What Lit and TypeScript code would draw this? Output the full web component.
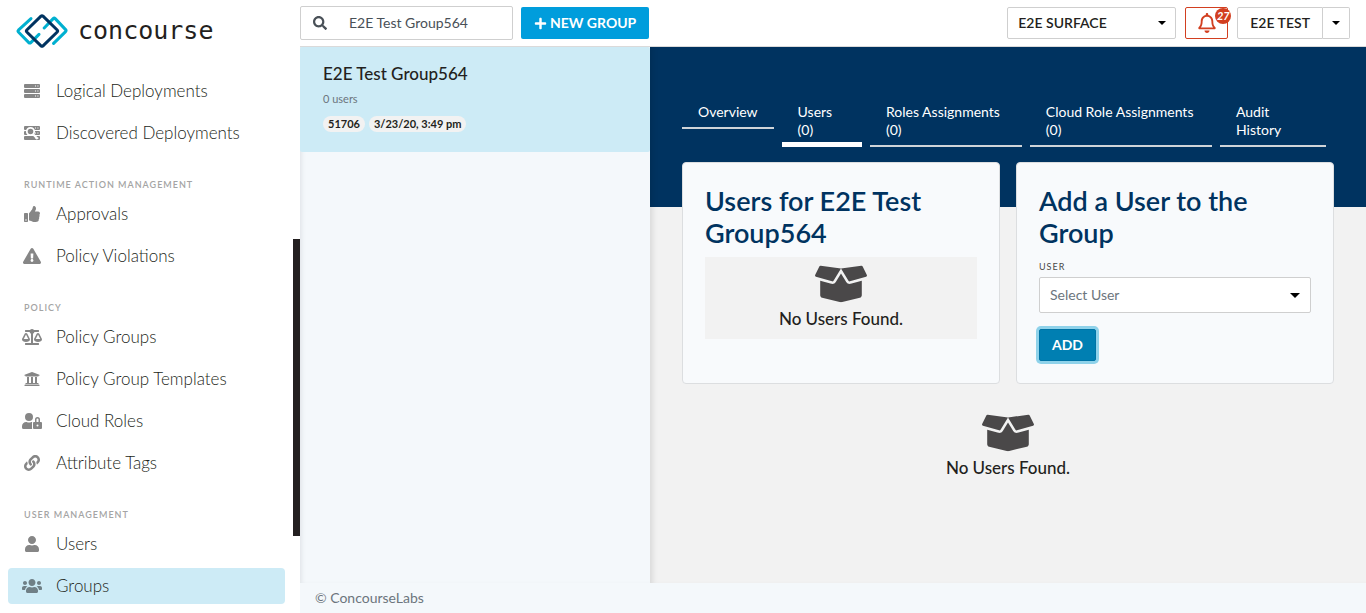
import { LitElement, html, css, svg } from "lit";
import { customElement, property } from "lit/decorators.js";
import { classMap } from "lit/directives/class-map.js";

type Glyph = { w: number; h?: number; d: string };

const GLYPHS: Record<string, Glyph> = {
  search: { w: 512, d: "M505 442.7L405.3 343c-4.5-4.5-10.6-7-17-7H372c27.6-35.3 44-79.7 44-128C416 93.1 322.9 0 208 0S0 93.1 0 208s93.1 208 208 208c48.3 0 92.7-16.4 128-44v16.3c0 6.4 2.5 12.5 7 17l99.7 99.7c9.4 9.4 24.6 9.4 33.9 0l28.3-28.3c9.4-9.4 9.4-24.6.1-34zM208 336c-70.7 0-128-57.2-128-128 0-70.7 57.2-128 128-128 70.7 0 128 57.2 128 128 0 70.7-57.2 128-128 128z" },
  plus: { w: 448, d: "M416 208H272V64c0-17.67-14.33-32-32-32h-32c-17.67 0-32 14.33-32 32v144H32c-17.67 0-32 14.33-32 32v32c0 17.67 14.33 32 32 32h144v144c0 17.67 14.33 32 32 32h32c17.67 0 32-14.33 32-32V304h144c17.67 0 32-14.33 32-32v-32c0-17.67-14.33-32-32-32z" },
  user: { w: 448, d: "M224 256c70.7 0 128-57.3 128-128S294.7 0 224 0 96 57.3 96 128s57.3 128 128 128zm89.6 32h-16.7c-22.2 10.2-46.9 16-72.9 16s-50.6-5.8-72.9-16h-16.7C60.2 288 0 348.2 0 422.4V464c0 26.5 21.5 48 48 48h352c26.5 0 48-21.5 48-48v-41.6c0-74.2-60.2-134.4-134.4-134.4z" },
  users: { w: 640, d: "M96 224c35.3 0 64-28.7 64-64s-28.7-64-64-64-64 28.7-64 64 28.7 64 64 64zm448 0c35.3 0 64-28.7 64-64s-28.7-64-64-64-64 28.7-64 64 28.7 64 64 64zm32 32h-64c-17.6 0-33.5 7.1-45.1 18.6 40.3 22.1 68.9 62 75.1 109.4h66c17.7 0 32-14.3 32-32v-32c0-35.3-28.7-64-64-64zm-256 0c61.9 0 112-50.1 112-112S381.9 32 320 32 208 82.1 208 144s50.1 112 112 112zm76.8 32h-8.3c-20.8 10-43.9 16-68.5 16s-47.6-6-68.5-16h-8.3C179.6 288 128 339.6 128 403.2V432c0 26.5 21.5 48 48 48h288c26.5 0 48-21.5 48-48v-28.8c0-63.6-51.6-115.2-115.2-115.2zm-223.7-13.4C161.5 263.1 145.6 256 128 256H64c-35.3 0-64 28.7-64 64v32c0 17.7 14.3 32 32 32h65.9c6.3-47.4 34.9-87.3 75.2-109.4z" },
  userLock: { w: 640, d: "M224 256A128 128 0 1 0 96 128a128 128 0 0 0 128 128zm96 64a63.08 63.08 0 0 1 8.1-30.5c-4.8-.5-9.5-1.5-14.5-1.5h-16.7a174.08 174.08 0 0 1-145.8 0h-16.7A134.43 134.43 0 0 0 0 422.4V464a48 48 0 0 0 48 48h280.9a63.54 63.54 0 0 1-8.9-32zm288-32h-32v-80a80 80 0 0 0-160 0v80h-32a32 32 0 0 0-32 32v160a32 32 0 0 0 32 32h224a32 32 0 0 0 32-32V320a32 32 0 0 0-32-32zM496 432a32 32 0 1 1 32-32 32 32 0 0 1-32 32zm32-144h-64v-80a32 32 0 0 1 64 0z" },
  warning: { w: 576, d: "M569.517 440.013C587.975 472.007 564.806 512 527.94 512H48.054c-36.937 0-59.999-40.055-41.577-71.987L246.423 23.985c18.467-32.009 64.72-31.951 83.154 0l239.94 416.028zM288 354c-25.405 0-46 20.595-46 46s20.595 46 46 46 46-20.595 46-46-20.595-46-46-46zm-43.673-165.346l7.418 136c.347 6.364 5.609 11.346 11.982 11.346h48.546c6.373 0 11.635-4.982 11.982-11.346l7.418-136c.375-6.874-5.098-12.654-11.982-12.654h-63.383c-6.884 0-12.356 5.78-11.981 12.654z" },
  thumb: { w: 512, d: "M104 224H24c-13.255 0-24 10.745-24 24v240c0 13.255 10.745 24 24 24h80c13.255 0 24-10.745 24-24V248c0-13.255-10.745-24-24-24zM64 472c-13.255 0-24-10.745-24-24s10.745-24 24-24 24 10.745 24 24-10.745 24-24 24zM384 81.452c0 42.416-25.97 66.208-33.277 94.548h101.723c33.397 0 59.397 27.746 59.553 58.098.084 17.938-7.546 37.249-19.439 49.197l-.11.11c9.836 23.337 8.237 56.037-9.308 79.469 8.681 25.895-.069 57.704-16.382 74.757 4.298 17.598 2.244 32.575-6.148 44.632C440.202 511.587 389.616 512 346.839 512l-2.845-.001c-48.287-.017-87.806-17.598-119.56-31.725-15.957-7.099-36.821-15.887-52.651-16.178-6.54-.12-11.783-5.457-11.783-11.998v-213.77c0-3.2 1.282-6.271 3.558-8.521 39.614-39.144 56.648-80.587 89.117-113.111 14.804-14.832 20.188-37.236 25.393-58.902C282.515 39.293 291.817 0 312 0c24 0 72 8 72 81.452z" },
  link: { w: 512, d: "M326.612 185.391c59.747 59.809 58.927 155.698.36 214.59-.11.12-.24.25-.36.37l-67.2 67.2c-59.27 59.27-155.699 59.262-214.96 0-59.27-59.26-59.27-155.7 0-214.96l37.106-37.106c9.84-9.84 26.786-3.3 27.294 10.606.648 17.722 3.826 35.527 9.69 52.721 1.986 5.822.567 12.262-3.783 16.612l-13.087 13.087c-28.026 28.026-28.905 73.66-1.155 101.96 28.024 28.579 74.086 28.749 102.325.51l67.2-67.19c28.191-28.191 28.073-73.757 0-101.83-3.701-3.694-7.429-6.564-10.341-8.569a16.037 16.037 0 0 1-6.947-12.606c-.396-10.567 3.348-21.456 11.698-29.806l21.054-21.055c5.521-5.521 14.182-6.199 20.584-1.731a152.482 152.482 0 0 1 20.522 17.197zM467.547 44.449c-59.261-59.262-155.69-59.27-214.96 0l-67.2 67.2c-.12.12-.25.25-.36.37-58.566 58.892-59.387 154.781.36 214.59a152.454 152.454 0 0 0 20.521 17.196c6.402 4.468 15.064 3.789 20.584-1.731l21.054-21.055c8.35-8.35 12.094-19.239 11.698-29.806a16.037 16.037 0 0 0-6.947-12.606c-2.912-2.005-6.64-4.875-10.341-8.569-28.073-28.073-28.191-73.639 0-101.83l67.2-67.19c28.239-28.239 74.3-28.069 102.325.51 27.75 28.3 26.872 73.934-1.155 101.96l-13.087 13.087c-4.35 4.35-5.769 10.79-3.783 16.612 5.864 17.194 9.042 34.999 9.69 52.721.509 13.906 17.454 20.446 27.294 10.606l37.106-37.106c59.271-59.259 59.271-155.699.001-214.959z" },
  box: { w: 640, d: "M425.7 256c-16.9 0-32.8-9-41.4-23.4L320 126l-64.2 106.6c-8.7 14.5-24.6 23.5-41.5 23.5-4.5 0-9-.6-13.3-1.9L64 215v178c0 14.7 10 27.5 24.2 31l216.2 54.1c10.2 2.5 20.9 2.5 31 0L551.8 424c14.2-3.6 24.2-16.4 24.2-31V215l-137 39.1c-4.3 1.3-8.8 1.9-13.3 1.9zm212.6-112.2L586.8 41c-3.1-6.2-9.8-9.8-16.7-8.9L320 64l91.7 152.1c3.8 6.3 11.4 9.3 18.5 7.3l197.9-56.5c9.9-2.9 14.7-13.9 10.2-23.1zM53.2 41L1.7 143.8c-4.6 9.2.3 20.2 10.1 23l197.9 56.5c7.1 2 14.7-1 18.5-7.3L320 64 69.8 32.1c-6.9-.8-13.5 2.7-16.6 8.9z" },
  scale: { w: 640, d: "M256 336h-.02c0-16.18 1.34-8.73-85.05-181.51-17.65-35.29-68.19-35.36-85.87 0C-2.06 328.75.02 320.33.02 336H0c0 44.18 57.31 80 128 80s128-35.82 128-80zM128 176l72 144H56l72-144zm511.98 160c0-16.18 1.34-8.73-85.05-181.51-17.65-35.29-68.19-35.36-85.87 0-87.12 174.26-85.04 165.84-85.04 181.51H384c0 44.18 57.31 80 128 80s128-35.82 128-80h-.02zM440 320l72-144 72 144H440zm88 128H352V153.25c23.51-10.29 41.16-31.48 46.39-57.25H528c8.84 0 16-7.16 16-16V48c0-8.84-7.16-16-16-16H383.64C369.04 12.68 346.09 0 320 0s-49.04 12.68-63.64 32H112c-8.84 0-16 7.16-16 16v32c0 8.84 7.16 16 16 16h129.61c5.23 25.76 22.87 46.96 46.39 57.25V448H112c-8.84 0-16 7.16-16 16v32c0 8.84 7.16 16 16 16h416c8.84 0 16-7.16 16-16v-32c0-8.84-7.16-16-16-16z" },
  bank: { w: 512, d: "M496 128v16a8 8 0 0 1-8 8h-24v12c0 6.627-5.373 12-12 12H60c-6.627 0-12-5.373-12-12v-12H24a8 8 0 0 1-8-8v-16a8 8 0 0 1 4.941-7.392l232-88a7.996 7.996 0 0 1 6.118 0l232 88A8 8 0 0 1 496 128zm-24 304H40c-13.255 0-24 10.745-24 24v16a8 8 0 0 0 8 8h464a8 8 0 0 0 8-8v-16c0-13.255-10.745-24-24-24zM96 192v192H60c-6.627 0-12 5.373-12 12v20h416v-20c0-6.627-5.373-12-12-12h-36V192h-64v192h-64V192h-64v192h-64V192H96z" },
  bell: { w: 448, d: "M439.39 362.29c-19.32-20.76-55.47-51.99-55.47-154.29 0-77.7-54.48-139.9-127.94-155.16V32c0-17.67-14.32-32-31.98-32s-31.98 14.33-31.98 32v20.84C118.56 68.1 64.08 130.3 64.08 208c0 102.3-36.15 133.53-55.47 154.29-6 6.45-8.66 14.16-8.61 21.71.11 16.4 12.98 32 32.1 32h383.8c19.12 0 32-15.6 32.1-32 .05-7.55-2.61-15.27-8.61-21.71zM67.53 368c21.22-27.97 44.42-74.33 44.53-159.42 0-.2-.06-.38-.06-.58 0-61.86 50.14-112 112-112s112 50.14 112 112c0 .2-.06.38-.06.58.11 85.1 23.31 131.46 44.53 159.42H67.53zM224 512c35.32 0 63.97-28.65 63.97-64H160.03c0 35.35 28.65 64 63.97 64z" },
  caret: { w: 10, h: 5, d: "M0 0h10L5 5z" },
};

@customElement("ui-icon")
export class UiIcon extends LitElement {
  static styles = css`
    :host {
      display: inline-flex;
      flex: none;
    }
    .glyph {
      display: block;
      width: 100%;
      height: 100%;
      fill: currentColor;
    }
    .cutout {
      fill: #fff;
    }
    .ring {
      fill: currentColor;
      stroke: #fff;
    }
  `;

  @property() name = "";

  private racks() {
    return svg`
      <rect x="0" y="1" width="16" height="4" rx="1"/>
      <rect x="0" y="6" width="16" height="4" rx="1"/>
      <rect x="0" y="11" width="16" height="4" rx="1"/>
      <g class="cutout">
        <rect x="11" y="2.5" width="1" height="1"/><rect x="13.4" y="2.5" width="1" height="1"/>
        <rect x="11" y="7.5" width="1" height="1"/><rect x="13.4" y="7.5" width="1" height="1"/>
        <rect x="11" y="12.5" width="1" height="1"/><rect x="13.4" y="12.5" width="1" height="1"/>
      </g>`;
  }

  render() {
    if (this.name === "server") {
      return html`<svg class="glyph" viewBox="0 0 16 16" aria-hidden="true">${this.racks()}</svg>`;
    }
    if (this.name === "serverSearch") {
      return html`<svg class="glyph" viewBox="0 0 16 16" aria-hidden="true">
        ${this.racks()}
        <circle class="ring" cx="6.5" cy="6.5" r="3.7" stroke-width="1.8" />
        <path class="ring" d="M9.4 9.6L13.6 14" stroke-width="2.2" />
      </svg>`;
    }
    const g = GLYPHS[this.name];
    return g
      ? html`<svg class="glyph" viewBox="0 0 ${g.w} ${g.h ?? 512}" aria-hidden="true"><path d=${g.d} /></svg>`
      : null;
  }
}

type NavItem = { label: string; icon: string; wide?: boolean; active?: boolean };
type NavSection = { title?: string; items: NavItem[] };

const NAV: NavSection[] = [
  {
    items: [
      { label: "Logical Deployments", icon: "server" },
      { label: "Discovered Deployments", icon: "serverSearch" },
    ],
  },
  {
    title: "Runtime Action Management",
    items: [
      { label: "Approvals", icon: "thumb" },
      { label: "Policy Violations", icon: "warning", wide: true },
    ],
  },
  {
    title: "Policy",
    items: [
      { label: "Policy Groups", icon: "scale", wide: true },
      { label: "Policy Group Templates", icon: "bank" },
      { label: "Cloud Roles", icon: "userLock", wide: true },
      { label: "Attribute Tags", icon: "link" },
    ],
  },
  {
    title: "User Management",
    items: [
      { label: "Users", icon: "user" },
      { label: "Groups", icon: "users", wide: true, active: true },
    ],
  },
];

@customElement("side-nav")
export class SideNav extends LitElement {
  static styles = css`
    :host {
      display: flex;
      min-height: 0;
      background: #fff;
    }
    .column {
      flex: 1;
      min-width: 0;
    }
    .brand {
      display: flex;
      align-items: center;
      gap: 10px;
      height: 62px;
      padding-left: 16px;
      color: #231f20;
      text-decoration: none;
    }
    .mark {
      width: 52px;
      height: 34px;
      fill: none;
      stroke-width: 3;
      stroke-linecap: round;
      stroke-linejoin: round;
    }
    .cyan {
      stroke: #00b0d0;
    }
    .navy {
      stroke: #003360;
    }
    .wordmark {
      font: 25px/30px "DejaVu Sans Mono", monospace;
    }
    .sections {
      padding: 11px 8px 0;
    }
    .title {
      margin: 0;
      padding: 21px 16px 4px;
      font-size: 9px;
      line-height: 14px;
      font-weight: 600;
      letter-spacing: 1px;
      text-transform: uppercase;
      color: #a4a4a4;
    }
    .items {
      display: grid;
      gap: 6px;
      margin: 0;
      padding: 0 0 6px;
      list-style: none;
    }
    .item {
      display: grid;
      grid-template-columns: 24px 1fr;
      align-items: center;
      gap: 12px;
      height: 36px;
      padding: 0 12px;
      border-radius: 4px;
      font-size: 17px;
      line-height: 20px;
      font-weight: 300;
      color: #231f20;
      text-decoration: none;
    }
    .active {
      background: #cdebf6;
    }
    .icon {
      justify-self: center;
      width: 16px;
      height: 16px;
      color: #868686;
    }
    .wide {
      width: 20px;
    }
    .active .icon {
      color: #6f7f86;
    }
    .rail {
      width: 7px;
      padding-top: 239px;
    }
    .thumb {
      height: 297px;
      background: #231f20;
    }
  `;

  render() {
    return html`
      <div class="column">
        <a class="brand" href="#home">
          <svg class="mark" viewBox="0 0 52 34" aria-hidden="true">
            <path class="cyan" d="M15 4.6L2.4 16.2Q1.5 17.1 2.4 18L12.8 28.6Q13.8 29.6 14.8 28.6L23 20.4" />
            <path class="cyan" d="M28.2 14L37.2 4.6Q38.2 3.6 39.2 4.6L49.6 15.6Q50.5 16.6 49.6 17.6L37.6 29.4" />
            <path class="navy" d="M25 2.2Q26 1.3 27 2.2L41.2 16Q42.2 17 41.2 18L27 31.8Q26 32.7 25 31.8L10.8 18Q9.8 17 10.8 16Z" />
          </svg>
          <span class="wordmark">concourse</span>
        </a>
        <nav class="sections" aria-label="Main">
          ${NAV.map(
            (s) => html`
              ${s.title ? html`<h2 class="title">${s.title}</h2>` : null}
              <ul class="items">
                ${s.items.map(
                  (i) => html`<li>
                    <a class=${classMap({ item: true, active: !!i.active })} href="#">
                      <ui-icon class=${classMap({ icon: true, wide: !!i.wide })} name=${i.icon}></ui-icon>
                      <span>${i.label}</span>
                    </a>
                  </li>`
                )}
              </ul>
            `
          )}
        </nav>
      </div>
      <div class="rail"><div class="thumb"></div></div>
    `;
  }
}

@customElement("top-bar")
export class TopBar extends LitElement {
  static styles = css`
    :host {
      display: flex;
      align-items: center;
      gap: 9px;
      height: 46px;
      padding-right: 16px;
      background: #fff;
      border-bottom: 1px solid #dadada;
    }
    .tools {
      display: flex;
      align-items: center;
      gap: 8px;
      margin-right: auto;
    }
    .search {
      display: flex;
      align-items: center;
      box-sizing: border-box;
      width: 213px;
      height: 34px;
      padding-left: 12px;
      gap: 22px;
      border: 1px solid #cfcfcf;
      border-radius: 2px;
      color: #495057;
    }
    .lens {
      width: 14px;
      height: 14px;
    }
    .query {
      flex: 1;
      min-width: 0;
      padding: 0;
      border: 0;
      outline: 0;
      background: none;
      font: 14px/20px Lato, sans-serif;
      color: #495057;
    }
    .create {
      display: flex;
      align-items: center;
      gap: 3px;
      height: 32px;
      padding: 0 13px;
      border: 0;
      border-radius: 2px;
      background: #009ddc;
      font: 700 14px/20px Lato, sans-serif;
      text-transform: uppercase;
      color: #fff;
    }
    .plus {
      width: 13px;
      height: 13px;
    }
    .surface {
      position: relative;
      width: 169px;
    }
    .choice {
      appearance: none;
      box-sizing: border-box;
      width: 100%;
      height: 32px;
      padding: 0 28px 0 10px;
      border: 1px solid #cfcfcf;
      border-radius: 2px;
      background: #fff;
      font: 600 14px/20px Lato, sans-serif;
      color: #231f20;
    }
    .arrow {
      width: 8px;
      height: 4px;
      color: #000;
    }
    .surface .arrow {
      position: absolute;
      right: 10px;
      top: 14px;
      pointer-events: none;
    }
    .alerts {
      position: relative;
      display: flex;
      align-items: center;
      justify-content: center;
      box-sizing: border-box;
      width: 43px;
      height: 32px;
      padding: 0;
      border: 1px solid #d23f20;
      border-radius: 2px;
      background: #fff;
      color: #d23f20;
    }
    .bell {
      width: 18px;
      height: 20px;
    }
    .count {
      position: absolute;
      top: 0;
      right: -4px;
      width: 16px;
      height: 16px;
      border-radius: 50%;
      background: #d23f20;
      font: italic 700 11px/16px Lato, sans-serif;
      text-align: center;
      color: #fff;
    }
    .account {
      display: flex;
    }
    .name,
    .more {
      height: 32px;
      border: 1px solid #cfcfcf;
      background: #fff;
      font: 600 14px/20px Lato, sans-serif;
      color: #231f20;
    }
    .name {
      padding: 0 12px;
      border-radius: 2px 0 0 2px;
    }
    .more {
      display: flex;
      align-items: center;
      padding: 0 9px;
      border-left: 0;
      border-radius: 0 2px 2px 0;
    }
  `;

  render() {
    return html`
      <div class="tools">
        <label class="search">
          <ui-icon class="lens" name="search"></ui-icon>
          <input class="query" type="text" aria-label="Search groups" .value=${"E2E Test Group564"} />
        </label>
        <button class="create" type="button"><ui-icon class="plus" name="plus"></ui-icon>New Group</button>
      </div>
      <div class="surface">
        <select class="choice" aria-label="Surface">
          <option>E2E SURFACE</option>
        </select>
        <ui-icon class="arrow" name="caret"></ui-icon>
      </div>
      <button class="alerts" type="button" aria-label="Notifications">
        <ui-icon class="bell" name="bell"></ui-icon>
        <span class="count">27</span>
      </button>
      <div class="account">
        <button class="name" type="button">E2E TEST</button>
        <button class="more" type="button" aria-label="Account menu"><ui-icon class="arrow" name="caret"></ui-icon></button>
      </div>
    `;
  }
}

@customElement("empty-note")
export class EmptyNote extends LitElement {
  static styles = css`
    :host {
      display: grid;
      justify-items: center;
      gap: 4px;
      padding: 6px 0 10px;
      background: #f2f2f2;
    }
    .box {
      width: 52px;
      height: 42px;
      color: #4a4849;
    }
    .text {
      margin: 0;
      font-size: 17px;
      line-height: 20px;
      font-weight: 500;
      color: #231f20;
    }
  `;

  render() {
    return html`<ui-icon class="box" name="box"></ui-icon>
      <p class="text">No Users Found.</p>`;
  }
}

const TABS = [
  { label: "Overview" },
  { label: "Users (0)", active: true },
  { label: "Roles Assignments (0)" },
  { label: "Cloud Role Assignments (0)" },
  { label: "Audit History" },
];

@customElement("group-detail")
export class GroupDetail extends LitElement {
  static styles = css`
    :host {
      display: block;
      background: linear-gradient(#003360, #003360) top / 100% 160px no-repeat #f2f2f2;
      box-shadow: inset 6px 0 6px -4px rgba(0, 0, 0, 0.12);
    }
    .tabs {
      display: flex;
      align-items: flex-start;
      padding: 56px 32px 0;
    }
    .tab {
      box-sizing: border-box;
      margin-right: 8px;
      padding: 0 16px 6px;
      border-bottom: 2px solid #cfd4d8;
      font-size: 14px;
      line-height: 18px;
      color: #fff;
      text-decoration: none;
    }
    .current {
      padding-bottom: 3px;
      border-bottom: 5px solid #fff;
    }
    .cards {
      display: grid;
      grid-template-columns: 1fr 1fr;
      gap: 16px;
      padding: 15px 32px 0;
    }
    .card {
      padding: 22px;
      border: 1px solid #dcdee0;
      border-radius: 4px;
      background: #f8fafc;
    }
    .heading {
      margin: 0;
      font-size: 27px;
      line-height: 32px;
      font-weight: 600;
      color: #003360;
    }
    .card .note {
      margin-top: 8px;
    }
    .label {
      display: block;
      margin-top: 11px;
      font-size: 9px;
      line-height: 14px;
      letter-spacing: 1px;
      text-transform: uppercase;
      color: #4a4849;
    }
    .picker {
      position: relative;
      margin-top: 3px;
    }
    .choice {
      appearance: none;
      display: block;
      box-sizing: border-box;
      width: 100%;
      height: 36px;
      padding: 0 28px 0 10px;
      border: 1px solid #cfcfcf;
      border-radius: 2px;
      background: #fff;
      font: 14px/20px Lato, sans-serif;
      color: #6c757d;
    }
    .arrow {
      position: absolute;
      right: 11px;
      top: 16px;
      width: 10px;
      height: 5px;
      color: #000;
      pointer-events: none;
    }
    .add {
      height: 32px;
      margin-top: 16px;
      padding: 0 12px;
      border: 1px solid #0073a5;
      border-radius: 2px;
      background: #007fb2;
      box-shadow: 0 0 0 3px #8fd2ea;
      font: 700 14px/20px Lato, sans-serif;
      color: #fff;
    }
    .below {
      margin: 22px 32px 0;
    }
  `;

  render() {
    return html`
      <nav class="tabs" aria-label="Group sections">
        ${TABS.map((t) => html`<a class=${classMap({ tab: true, current: !!t.active })} href="#">${t.label}</a>`)}
      </nav>
      <div class="cards">
        <section class="card">
          <h2 class="heading">Users for E2E Test Group564</h2>
          <empty-note class="note"></empty-note>
        </section>
        <section class="card">
          <h2 class="heading">Add a User to the Group</h2>
          <label class="label" for="user">User</label>
          <div class="picker">
            <select class="choice" id="user">
              <option>Select User</option>
            </select>
            <ui-icon class="arrow" name="caret"></ui-icon>
          </div>
          <button class="add" type="button">ADD</button>
        </section>
      </div>
      <empty-note class="below"></empty-note>
    `;
  }
}

@customElement("app-root")
export class AppRoot extends LitElement {
  static styles = css`
    :host {
      display: grid;
      grid-template-columns: 300px 1fr;
      height: 100vh;
      overflow: hidden;
      font-family: Lato, sans-serif;
      color: #231f20;
      background: #f4f8fb;
    }
    .page {
      display: flex;
      flex-direction: column;
      min-width: 0;
      min-height: 0;
    }
    .body {
      flex: 1;
      display: grid;
      grid-template-columns: 350px 1fr;
      min-height: 0;
      box-shadow: inset 4px 0 4px -2px #e2e6ea;
    }
    .group {
      display: grid;
      justify-items: start;
      padding: 16px 23px 20px;
      background: #cdebf6;
      color: #231f20;
      text-decoration: none;
      border-radius: 2px;
    }
    .name {
      font-size: 17px;
      line-height: 22px;
      font-weight: 500;
    }
    .members {
      margin-top: 7px;
      font-size: 11px;
      line-height: 14px;
      color: #6c757d;
    }
    .tags {
      display: flex;
      gap: 4px;
      margin-top: 10px;
    }
    .tag {
      padding: 0 5px;
      border-radius: 8px;
      background: #f2f2f2;
      font-size: 11px;
      line-height: 16px;
      font-weight: 700;
    }
    .footer {
      padding: 6px 15px;
      font-size: 14px;
      line-height: 18px;
      color: #6c757d;
    }
  `;

  render() {
    return html`
      <side-nav></side-nav>
      <div class="page">
        <top-bar></top-bar>
        <div class="body">
          <div>
            <a class="group" href="#">
              <span class="name">E2E Test Group564</span>
              <span class="members">0 users</span>
              <span class="tags"><span class="tag">51706</span><span class="tag">3/23/20, 3:49 pm</span></span>
            </a>
          </div>
          <group-detail></group-detail>
        </div>
        <footer class="footer">© ConcourseLabs</footer>
      </div>
    `;
  }
}
